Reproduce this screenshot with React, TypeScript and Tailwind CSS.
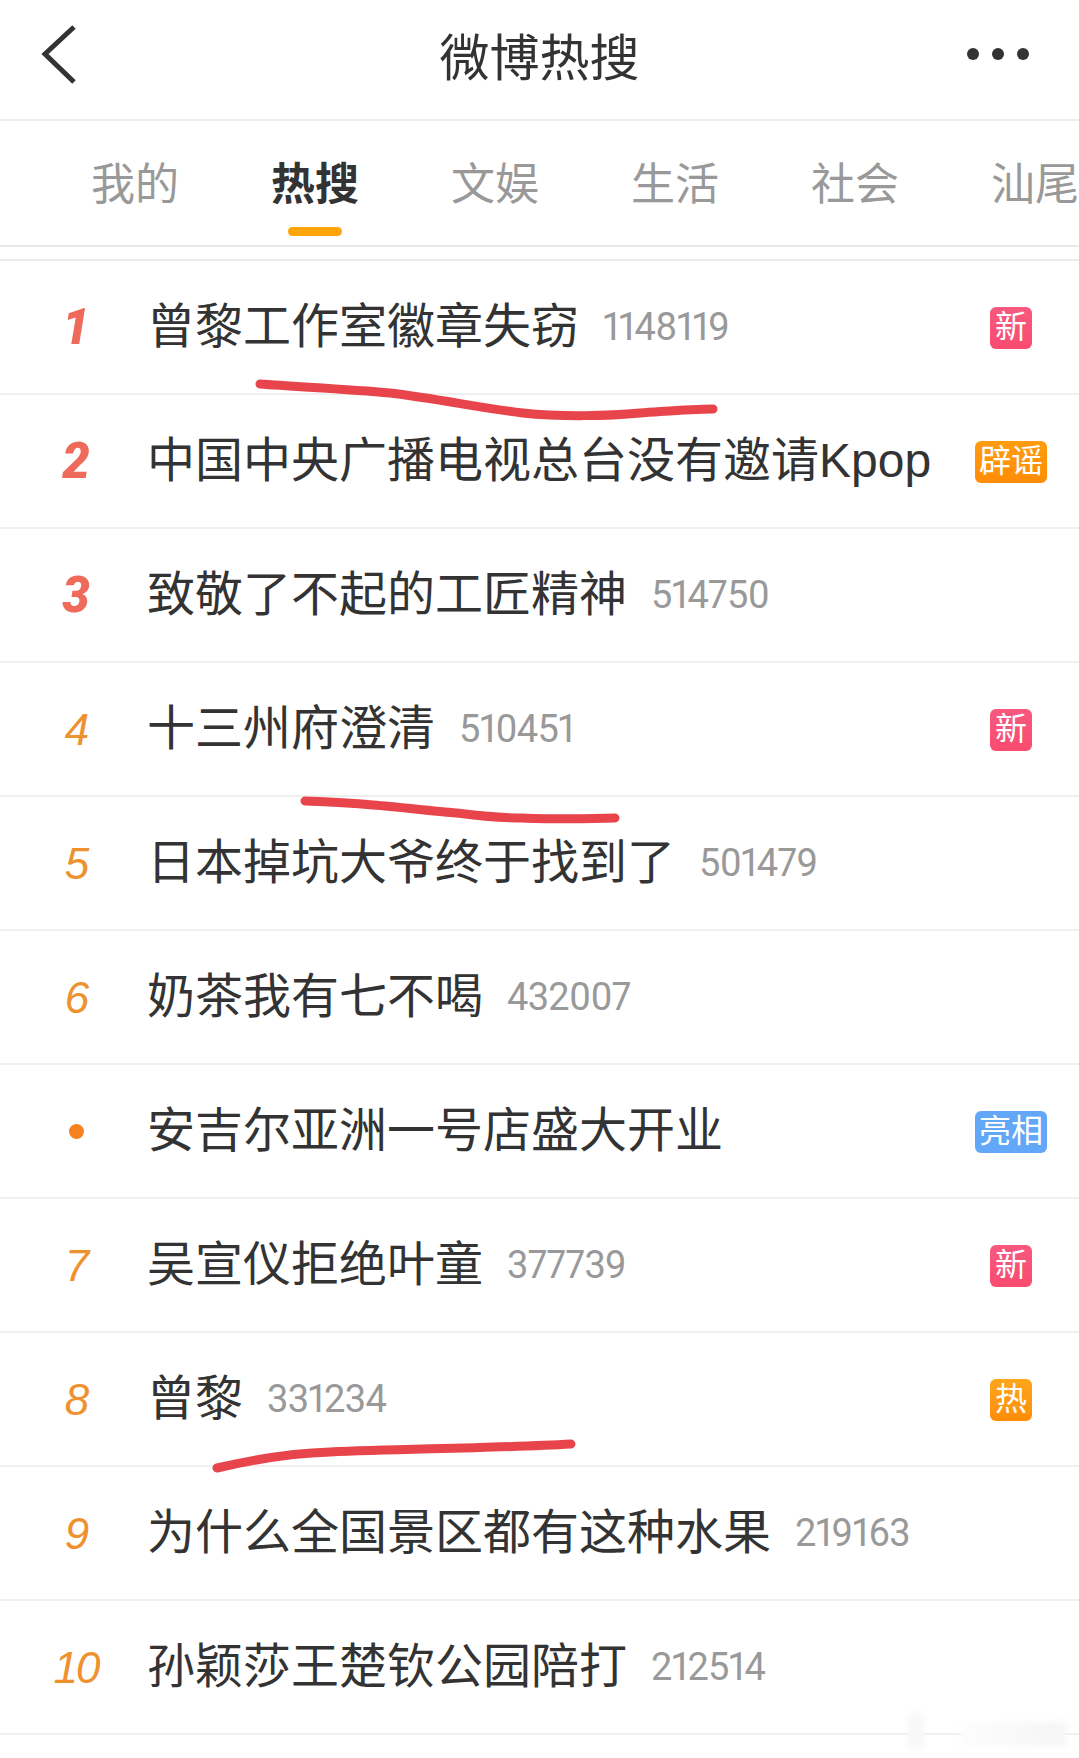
const tabs = ['我的', '热搜', '文娱', '生活', '社会', '汕尾'];

type Badge = { label: string; className: string };

const xin: Badge = { label: '新', className: 'w-[42px] bg-gradient-to-b from-[#f8597f] to-[#f94b70]' };
const re: Badge = { label: '热', className: 'w-[42px] bg-gradient-to-b from-[#fea61c] to-[#fe8d08]' };
const piyao: Badge = { label: '辟谣', className: 'w-[72px] bg-gradient-to-b from-[#ff9c10] to-[#ff8c05]' };
const liangxiang: Badge = { label: '亮相', className: 'w-[72px] bg-[#62a7f8]' };

const rows: { rank: string; title: string; count?: string; badge?: Badge }[] = [
  { rank: '1', title: '曾黎工作室徽章失窃', count: '1148119', badge: xin },
  { rank: '2', title: '中国中央广播电视总台没有邀请Kpop', badge: piyao },
  { rank: '3', title: '致敬了不起的工匠精神', count: '514750' },
  { rank: '4', title: '十三州府澄清', count: '510451', badge: xin },
  { rank: '5', title: '日本掉坑大爷终于找到了', count: '501479' },
  { rank: '6', title: '奶茶我有七不喝', count: '432007' },
  { rank: '•', title: '安吉尔亚洲一号店盛大开业', badge: liangxiang },
  { rank: '7', title: '吴宣仪拒绝叶童', count: '377739', badge: xin },
  { rank: '8', title: '曾黎', count: '331234', badge: re },
  { rank: '9', title: '为什么全国景区都有这种水果', count: '219163' },
  { rank: '10', title: '孙颖莎王楚钦公园陪打', count: '212514' },
];

const Rank = ({ rank, index }: { rank: string; index: number }) => {
  if (rank === '•') {
    return <span className="h-[15px] w-[15px] rounded-full bg-[#f5811f]" />;
  }
  if (index < 3) {
    return <span className="font-['Roboto',sans-serif] text-[49px] font-black italic text-[#ee6a5b]">{rank}</span>;
  }
  return <span className="font-['Liberation_Sans',sans-serif] text-[44px] italic tracking-[-2px] text-[#ee912f]">{rank}</span>;
};

export default function App() {
  return (
    <div className="relative h-[1758px] w-[1079px] overflow-hidden bg-white font-['Liberation_Sans','Noto_Sans_CJK_SC',sans-serif] text-[#333333]">
      <header className="relative flex h-[121px] items-center justify-center border-b-2 border-[#ececec] pb-[1px]">
        <svg className="absolute left-[40px] top-[24px]" width="40" height="62" viewBox="0 0 40 62" fill="none">
          <path d="M34 3 L5 30 L34 58" stroke="#333" strokeWidth="5" />
        </svg>
        <h1 className="text-[50px] font-normal leading-none">微博热搜</h1>
        <div className="absolute left-[967px] top-[48px] flex gap-[13px]">
          <span className="h-3 w-3 rounded-full bg-[#333]" />
          <span className="h-3 w-3 rounded-full bg-[#333]" />
          <span className="h-3 w-3 rounded-full bg-[#333]" />
        </div>
      </header>

      <nav className="flex h-[126px] overflow-hidden border-b-2 border-[#e8e8e8] pl-[45px]">
        {tabs.map((tab, i) => (
          <div key={tab} className="flex w-[180px] shrink-0 flex-col items-center pt-[32px]">
            <span className={`whitespace-nowrap text-[44px] leading-[64px] ${i === 1 ? 'font-bold text-[#333]' : 'text-[#999]'}`}>
              {tab}
            </span>
            {i === 1 && <span className="mt-[10px] h-[9px] w-[54px] rounded-full bg-[#ffa50c]" />}
          </div>
        ))}
      </nav>

      <ul className="mt-[12px] border-t-2 border-[#ececec]">
        {rows.map((row, i) => (
          <li key={row.rank} className="flex h-[134px] items-center border-b-2 border-[#efefef]">
            <div className="flex w-[147px] items-center justify-center pl-[5px] pt-[1px]">
              <Rank rank={row.rank} index={i} />
            </div>
            <span className="whitespace-nowrap text-[48px] leading-none">{row.title}</span>
            {row.count && (
              <span className="ml-[24px] pt-[1px] font-['Roboto',sans-serif] text-[38px] tracking-[-0.7px] text-[#999] [font-variant-numeric:proportional-nums]">
                {row.count}
              </span>
            )}
            {row.badge && (
              <div className="ml-auto flex w-[136px] justify-center pt-[1px]">
                <span className={`flex h-[42px] items-center justify-center rounded-[6px] pb-[1px] text-[32px] leading-none text-white ${row.badge.className}`}>
                  {row.badge.label}
                </span>
              </div>
            )}
          </li>
        ))}
      </ul>

      {/* hand-drawn marks on top of the screenshot */}
      <svg className="absolute left-0 top-0" width="1079" height="1758" fill="none" stroke="#e8444b" strokeLinecap="round" strokeWidth="9">
        <path d="M260 384 C 300 387 350 389 390 393 C 440 399 480 408 523 413 C 560 417 610 416 640 413 C 670 411 690 409 713 409" />
        <path d="M305 801 C 330 802 350 803 373 805 C 400 807 430 811 457 813 C 480 816 500 818 523 818 C 540 819 590 819 615 818" />
        <path d="M217 1468 C 260 1458 295 1453 330 1452 C 400 1449 500 1448 571 1444" />
      </svg>

      {/* faint site watermark */}
      <div className="absolute left-[908px] top-[1713px] h-[35px] w-[16px] bg-[#f8f8f8] blur-[3px]" />
      <div className="absolute left-[960px] top-[1722px] h-[24px] w-[106px] bg-gradient-to-r from-[#fdfdfd] to-[#f5f5f5] blur-[3px]" />
    </div>
  );
}
